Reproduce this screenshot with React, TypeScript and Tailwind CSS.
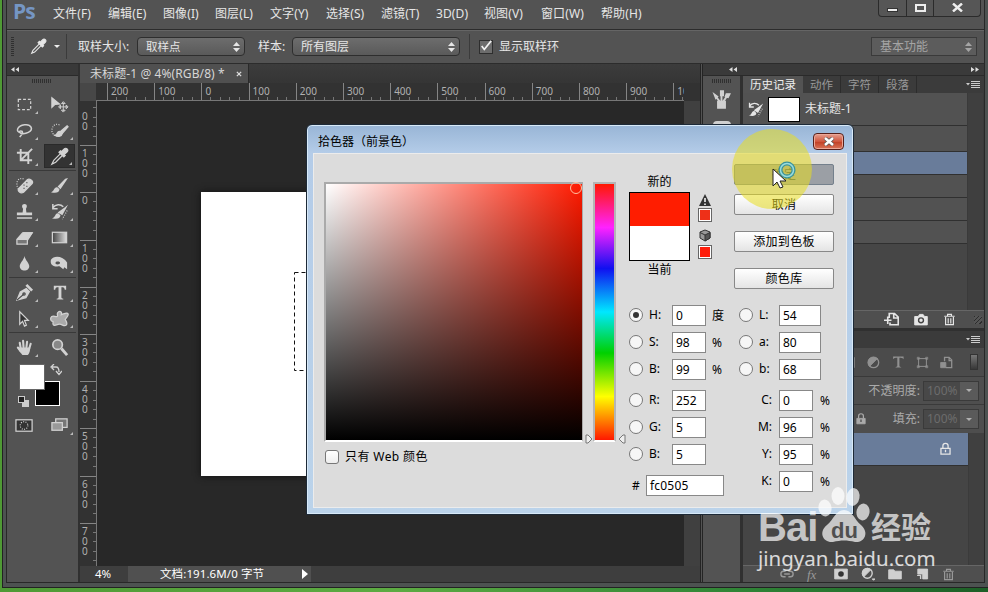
import type { ReactNode } from "react";

interface IconProps {
  children: ReactNode;
  size?: string;
  box?: string;
}

interface ToolProps {
  children: ReactNode;
  active?: boolean;
  corner?: boolean;
}

interface FieldProps {
  label: string;
  value: string;
  unit?: string;
  checked?: boolean;
}

const menus = [
  { label: "文件(F)", width: "w-[55px]" },
  { label: "编辑(E)", width: "w-[55px]" },
  { label: "图像(I)", width: "w-[52px]" },
  { label: "图层(L)", width: "w-[55px]" },
  { label: "文字(Y)", width: "w-[56px]" },
  { label: "选择(S)", width: "w-[55px]" },
  { label: "滤镜(T)", width: "w-[55px]" },
  { label: "3D(D)", width: "w-[48px]" },
  { label: "视图(V)", width: "w-[57px]" },
  { label: "窗口(W)", width: "w-[60px]" },
  { label: "帮助(H)", width: "w-[55px]" },
];

const horizontalMarks = ["200", "100", "0", "100", "200", "300", "400", "500", "600", "700", "800", "900", "10"];
const verticalMarks = ["\u00a000", "100", "0", "100", "200", "300", "400", "500", "600", "700"];

export default function App() {
  return (
    <div className="relative w-[988px] h-[592px] overflow-hidden bg-[linear-gradient(90deg,#4f9a35,#5cab42_40%,#2f8436_75%,#1d5f27)] pl-[2px] pb-[4px] font-['Noto_Sans','Noto_Sans_CJK_SC',sans-serif] text-xs leading-none text-[#e6e6e6] whitespace-nowrap">
      <div className="flex flex-col h-[588px] bg-[#4d5251] border-l border-b border-[#222] pl-[3px] pr-[3px] pb-[4px]">
        <div className="flex flex-col flex-1 min-h-0 bg-[#535353] border-x border-b border-[#282828]">
          <MenuBar />
          <OptionsBar />
          <div className="flex flex-1 min-h-0">
            <Toolbar />
            <Workspace />
            <RightDock />
          </div>
        </div>
      </div>
      <ColorPicker />
      <Watermark />
      <Pointer />
    </div>
  );
}

function Icon({ children, size = "w-5 h-5", box = "0 0 20 20" }: IconProps) {
  return (
    <svg className={`${size} shrink-0`} viewBox={box} fill="none" stroke="currentColor" strokeWidth="1.3">
      {children}
    </svg>
  );
}

function MenuBar() {
  return (
    <div className="flex items-center h-[29px] shrink-0 pl-[6px]">
      <span className="w-[40px] text-[21px] font-bold text-[#7596c4] font-['Open_Sans',sans-serif] tracking-[-1px] -mt-[7px]">Ps</span>
      {menus.map((menu) => (
        <span key={menu.label} className={`${menu.width} shrink-0 -mt-px tracking-[0.1px]`}>{menu.label}</span>
      ))}
      {/* Window buttons */}
      <div className="flex ml-auto mr-[3px] self-start h-[17px] border border-t-0 border-[#2b2b2b] rounded-b-sm bg-[#565656] divide-x divide-[#2b2b2b]">
        <span className="flex items-center justify-center w-[28px]"><i className="w-[11px] h-[4px] bg-[#eee] border border-[#333] mt-1" /></span>
        <span className="flex items-center justify-center w-[27px]"><i className="w-[11px] h-[8px] border-2 border-[#eee] -mt-px" /></span>
        <span className="flex items-center justify-center w-[46px]">
          <svg className="w-[11px] h-[9px] -mt-[2px]" viewBox="0 0 11 9" stroke="#eee" strokeWidth="2.4"><path d="M1 0.5 10 8.5M10 0.5 1 8.5" /></svg>
        </span>
      </div>
    </div>
  );
}

function UpDown() {
  return (
    <svg className="w-[7px] h-[10px] ml-auto" viewBox="0 0 7 10" fill="currentColor"><path d="M0 4 3.5 0 7 4zM0 6h7L3.5 10z" /></svg>
  );
}

function OptionsBar() {
  return (
    <div className="flex items-center h-[35px] shrink-0 border-y border-[#2c2c2c] shadow-[inset_0_1px_0_#656565] pl-[4px] pr-[7px]">
      <Grip className="w-[3px] h-[20px] bg-[repeating-linear-gradient(180deg,#303030_0_1px,transparent_1px_2px)]" />
      <span className="ml-[16px]"><Eyedropper /></span>
      <span className="ml-[7px] border-x-[3px] border-x-transparent border-t-[3px] border-t-[#eee]" />
      <span className="h-[25px] w-px bg-[#3b3b3b] ml-[6px]" />
      <span className="w-[59px] ml-[11px]">取样大小:</span>
      <div className="flex items-center w-[108px] h-[19px] pr-[4px] pl-[8px] text-[11.5px] border border-[#2e2e2e] rounded-sm bg-gradient-to-b from-[#6d6d6d] to-[#5a5a5a]">
        取样点<UpDown />
      </div>
      <span className="w-[34px] ml-[13px]">样本:</span>
      <div className="flex items-center w-[168px] h-[19px] pr-[4px] pl-[8px] border border-[#2e2e2e] rounded-sm bg-gradient-to-b from-[#6d6d6d] to-[#5a5a5a]">
        所有图层<UpDown />
      </div>
      <span className="h-[25px] w-px bg-[#3b3b3b] ml-[9px]" />
      <span className="flex w-[14px] h-[14px] ml-[9px] border border-[#2e2e2e] bg-[#6c6c6c]">
        <svg className="w-[14px] h-[14px] -mt-[2px]" viewBox="0 0 14 14" fill="none" stroke="#f2f2f2" strokeWidth="2"><path d="M2 7 5 11 13 1" /></svg>
      </span>
      <span className="ml-[6px]">显示取样环</span>
      <div className="flex items-center w-[106px] h-[19px] pr-[4px] pl-[8px] ml-auto text-[#a5a5a5] border border-[#3a3a3a] bg-[#5c5c5c]">
        基本功能<UpDown />
      </div>
    </div>
  );
}

function Grip({ className }: { className: string }) {
  return <span className={`block shrink-0 ${className}`} />;
}

function Eyedropper() {
  return (
    <Icon size="w-[17px] h-[17px]">
      <path d="M11 7 3.5 14.5 2 18l3.5-1.5L13 9" />
      <path d="M9.5 5.5 14.5 10.500 16 9l-1-1 3-3c2-2-1-5-3-3l-3 3-1-1z" fill="currentColor" />
    </Icon>
  );
}

// One cell of the two-column tool grid
function Tool({ children, active, corner = true }: ToolProps) {
  return (
    <div className={`flex items-center justify-center relative h-[24px] w-[31px] my-px ${active ? "bg-[#333] border border-[#2a2a2a]" : ""}`}>
      <Icon size="w-[19px] h-[19px]">{children}</Icon>
      {corner && <span className="absolute right-[2px] bottom-[2px] border-l-[3px] border-b-[3px] border-l-transparent border-b-[#bbb]" />}
    </div>
  );
}

function Toolbar() {
  return (
    <div className="w-[73px] shrink-0 border-r-2 border-[#303030] text-[#d2d2d2]">
      <div className="h-[12px] bg-[#393939] border-b border-[#2a2a2a] pl-[4px] pt-[3px]"><Chevrons /></div>
      <Grip className="w-[19px] h-[4px] mt-[3px] ml-[25px] bg-[repeating-linear-gradient(90deg,#303030_0_1px,transparent_1px_2px)]" />
      <div className="grid grid-cols-2 gap-x-[2px] px-[2px] mt-[8px]">
        <Tool><rect x="3.500" y="4.500" width="13" height="11" strokeDasharray="3 2" /></Tool>
        <Tool corner={false}><path d="M2 3v10l3-3 5-.5z" fill="currentColor" /><path d="M14 8v9M9.500 12.500h9M14 7l-2 2h4zM14 18l-2-2h4zM9 12.500l2-2v4zM19 12.500l-2-2v4z" strokeWidth="1" /></Tool>
        <Tool><path d="M7 13C-1 11 3 5 10 4s10 5 4 8c-3 1.500-8 2-9 0s3-2 3 0-2 3-3 5" strokeWidth="1.600" /></Tool>
        <Tool><path d="M10 4C4 2 2 7 2 10s3 7 8 5" strokeDasharray="1 1.500" /><path d="m11 11 7-6 1 1-6 7z" fill="currentColor" /><path d="M5 15c3 0 2-4 5-4l3 2c-1 4-5 4-8 2z" fill="currentColor" /></Tool>
        <Tool><path d="M6 2v12h12M2 6h12v12M7 13l11-11" strokeWidth="2" /></Tool>
        <Tool active><path d="M11 7 4 14 2 18l4-2 7-7" /><path d="m9.500 5.500 5 5L16 9l-1-1 3-3c2-2-1-5-3-3l-3 3-1-1z" fill="currentColor" /></Tool>
      </div>
      <div className="h-px mx-[2px] mt-px mb-px bg-[#393939]" />
      <div className="grid grid-cols-2 gap-x-[2px] px-[2px]">
        <Tool><path d="M9 3C2 1 0 9 4 14" strokeDasharray="1 1.500" /><path d="m4 13 9-9c2-2 7 1 5 4L9 17c-3 2-7-1-5-4z" fill="currentColor" /><path d="M9 9.500h1M12 7h1M12 11h1M9 13h1" stroke="#444" /></Tool>
        <Tool><path d="m8 11 8-8 3-1-8 12zM1 17c4-1 3-6 7-5l2 2c0 4-5 4-9 3z" fill="currentColor" stroke="none" /></Tool>
        <Tool><path d="M10 2c3 0 3 3 1.500 5l.5 4h6v3H2v-3h6l.5-4C7 5 7 2 10 2zM2 16h16v1.500H2z" fill="currentColor" stroke="none" /></Tool>
        <Tool><path d="M3 6c3-4 8-4 11-1M3 2v5h5" strokeWidth="1.600" /><path d="m8 11 7-5 4-3-6 11zM2 17c4 0 3-6 7-5l2 2c0 4-5 4-9 3z" fill="currentColor" stroke="none" /><path d="m18 9-5 9" strokeDasharray="1 1.500" /></Tool>
        <Tool><path d="m2 12 6-7h10l-5 8v4H2z" fill="#777" /><path d="m3 12 6-7h9l-5 7z" fill="currentColor" /></Tool>
        <Tool>
          <defs><linearGradient id="toolFade"><stop stopColor="#444" /><stop offset="1" stopColor="#ddd" /></linearGradient></defs>
          <rect x="2.500" y="4.500" width="15" height="11" fill="url(#toolFade)" />
        </Tool>
        <Tool><path d="M10 2c1 5 5 7 5 11 0 6-10 6-10 0 0-4 4-6 5-11z" fill="currentColor" stroke="none" /></Tool>
        <Tool><path d="M1 6c3-5 13-4 17 3v7l-3-2-1 2-4-3c-8 1-10-3-9-7zM8 8c-3 0-3 3 0 3s4-3 0-3z" fill="currentColor" fillRule="evenodd" stroke="none" /></Tool>
      </div>
      <div className="h-px mx-[2px] mt-px mb-px bg-[#393939]" />
      <div className="grid grid-cols-2 gap-x-[2px] px-[2px]">
        <Tool><path d="M12 5 5 9 1 19l11-3 4-7zM13 1l6 6-2 2-6-6z" fill="currentColor" stroke="none" /><path d="m2 18 7-6" stroke="#444" /><circle cx="9.500" cy="11.500" r="1.200" stroke="#444" /></Tool>
        <Tool><path d="M4 3h13v4h-1.500c-.3-2-.8-2.500-3.500-2.500V15c0 1 .5 1.500 2 1.500v.8H7v-.8c1.500 0 2-.5 2-1.500V4.500c-2.700 0-3.200.5-3.500 2.500H4z" fill="currentColor" stroke="none" /></Tool>
        <Tool><path d="M5 3v13l3-3 2 5 2-1-2-5h4z" fill="#333" /></Tool>
        <Tool><path d="M8 4c2-3 5-1 4 2 3-1 6-3 7-1s-2 4-3 6c1 2 3 4 1 6s-4-1-7-1-4 2-6 1 0-4-1-4-3-1-2-4 4-1 6-1 0-2 1-4z" fill="#aaa" /></Tool>
      </div>
      <div className="h-px mx-[2px] mt-px mb-px bg-[#393939]" />
      <div className="grid grid-cols-2 gap-x-[2px] px-[2px]">
        <Tool><path d="M6 11 5 5M9 10 8.500 3M12 10l.7-6M15 11l1.500-5M6 14 3 10" strokeWidth="2.200" strokeLinecap="round" /><path d="M5 10h11c0 5-2 8-3 8H8c-1-1-4-5-4-6z" fill="currentColor" stroke="none" /></Tool>
        <Tool corner={false}><circle cx="8" cy="7" r="5" strokeWidth="1.800" fill="#888" /><path d="m12 11 6 7" strokeWidth="3" /></Tool>
      </div>
      {/* Foreground and background colours overlap */}
      <div className="relative h-[48px] mt-[3px]">
        <span className="absolute left-[28px] top-[18px] w-[25px] h-[25px] bg-black border border-white" />
        <span className="absolute left-[12px] top-[1px] w-[26px] h-[26px] bg-white border border-[#666]" />
        <svg className="absolute left-[43px] top-[1px] w-[12px] h-[12px]" viewBox="0 0 12 12" fill="none" stroke="currentColor" strokeWidth="1.300"><path d="M2 3h4c2 0 3 1 3 5M4 0 1 3l3 3M6 7l3 3.500L12 7" /></svg>
        <span className="absolute left-[15px] top-[37px] w-[7px] h-[7px] bg-[#ccc]" />
        <span className="absolute left-[11px] top-[33px] w-[7px] h-[7px] bg-[#222] border border-[#ccc]" />
      </div>
      <div className="grid grid-cols-2 gap-x-[2px] px-[2px] mt-px">
        <Tool corner={false}><rect x="1" y="4" width="17" height="12" fill="#333" /><circle cx="9.500" cy="10" r="4" strokeDasharray="1 1.500" /></Tool>
        <Tool><rect x="6" y="3" width="12" height="9" fill="#777" /><rect x="2" y="7" width="11" height="8" fill="#999" /></Tool>
      </div>
    </div>
  );
}

function Chevrons({ right }: { right?: boolean }) {
  return (
    <svg className={`w-[8px] h-[5px] ${right ? "rotate-180" : ""}`} viewBox="0 0 8 5" fill="#ddd"><path d="M3.500 0v5L0 2.500zM8 0v5L4.500 2.500z" /></svg>
  );
}

function Workspace() {
  return (
    <div className="flex flex-col w-[621px] shrink-0 border-r border-[#242424]">
      <div className="flex h-[19px] shrink-0 bg-gradient-to-b from-[#3c3c3c] to-[#353535]">
        <div className="flex items-center w-[169px] pl-[10px] bg-[#505050] border-r border-[#2a2a2a] text-[#d6d6d6] pt-[1px]">
          <span className="tracking-[0.1px]">未标题-1 @ 4%(RGB/8) *</span>
          <svg className="w-[6px] h-[6px] ml-auto mr-[6px]" viewBox="0 0 7 7" stroke="#ddd" strokeWidth="1.500"><path d="m1 1 5 5M6 1 1 6" /></svg>
        </div>
      </div>
      {/* Horizontal ruler */}
      <div className="flex h-[18px] shrink-0 bg-[#323232] text-[#b0b0b0] text-[10px]">
        <span className="w-[16px] shrink-0 bg-[#474747]" />
        <div className="flex w-[588px] overflow-hidden pl-[11px] border-b border-[#777]">
          {horizontalMarks.map((mark, index) => (
            <div key={index} className="relative flex w-[47.2px] shrink-0 border-l border-[#858585] pl-[3px] pt-[3px]">
              {mark}
              <Ticks direction="row" />
            </div>
          ))}
        </div>
      </div>
      <div className="flex flex-1 min-h-0">
        {/* Vertical ruler */}
        <div className="w-[17px] shrink-0 bg-[#323232] border-r border-[#777] overflow-hidden text-[#b0b0b0] text-[10px]">
          <div className="-mt-[3px]">
            {verticalMarks.map((mark, index) => (
              <div key={index} className="relative flex flex-col h-[47.2px] border-t border-[#858585] pl-[2px] pt-[2px]">
                {mark.split("").map((digit, place) => <span key={place} className="h-[10px]">{digit}</span>)}
                <Ticks direction="column" />
              </div>
            ))}
          </div>
        </div>
        <div className="relative flex-1 bg-[#282828] overflow-hidden">
          <div className="absolute left-[104px] top-[91px] w-[400px] h-[284px] bg-white shadow-[0_0_7px_#111]" />
          <svg className="absolute left-[197px] top-[171px] w-[100px] h-[100px]" viewBox="0 0 100 100" fill="none" stroke="#111"><path d="M.5 .5h99v98H.5z" strokeDasharray="4 3" /></svg>
        </div>
        <div className="w-[16px] shrink-0 bg-[#404040]" />
      </div>
      <div className="flex items-center h-[16px] shrink-0 bg-[#3e3e3e] text-[11.5px] text-white">
        <span className="w-[48px] pl-[15px]">4%</span>
        <div className="flex items-center w-[183px] h-full pl-[32px] bg-[#505050]">
          <span className="tracking-[0.1px]">文档:191.6M/0 字节</span>
          <span className="ml-auto mr-[3px] border-y-[5px] border-y-transparent border-l-[6px] border-l-white" />
        </div>
      </div>
    </div>
  );
}

function Ticks({ direction }: { direction: "row" | "column" }) {
  return direction === "row" ? (
    <div className="absolute left-[8px] bottom-0 flex gap-[8.500px]">
      {[0, 1, 2, 3].map((tick) => <i key={tick} className="w-px h-[3px] bg-[#777]" />)}
    </div>
  ) : (
    <div className="absolute top-[8px] right-0 flex flex-col gap-[8.500px]">
      {[0, 1, 2, 3].map((tick) => <i key={tick} className="w-[3px] h-px bg-[#777]" />)}
    </div>
  );
}

function PanelMenu() {
  return (
    <svg className="w-[14px] h-[9px] ml-auto mr-[4px] self-center" viewBox="0 0 14 9" stroke="#ccc"><path d="M5 1.500h9M5 3.500h9M5 5.500h9M5 7.500h9" /><path d="M0 3h4L2 5.500z" fill="#ccc" stroke="none" /></svg>
  );
}

function RightDock() {
  return (
    <div className="flex flex-col flex-1 min-w-0 ml-px border-l border-[#242424] bg-[#303030]">
      <div className="flex h-[12px] shrink-0 bg-[#3a3a3a] border-b border-[#2a2a2a] pl-[26px] pr-[5px] pt-[3px] justify-between">
        <Chevrons />
        <Chevrons right />
      </div>
      <div className="flex flex-1 min-h-0">
        <div className="flex flex-col items-center w-[37px] shrink-0 bg-[#535353] text-[#d0d0d0]">
          <Grip className="w-[19px] h-[4px] mt-[3px] bg-[repeating-linear-gradient(90deg,#303030_0_1px,transparent_1px_2px)]" />
          <span className="mt-[6px]">
            <Icon size="w-[19px] h-[21px]"><path d="M6 12h8v7H6z" fill="currentColor" /><path d="M8 12 4 7M10 12V3M12 12l4-6" strokeWidth="2" /><path d="M2 4l4 3-2 2zM9 1h3v5H9zM15 4h4l-2 4-3-1z" fill="currentColor" /></Icon>
          </span>
          <span className="w-[18px] h-[8px] mt-[11px] bg-[#d0d0d0] rounded-t-sm" />
        </div>
        <div className="flex flex-col flex-1 min-w-0 ml-[3px]">
          <HistoryPanel />
          <LayersPanel />
        </div>
      </div>
    </div>
  );
}

function HistoryPanel() {
  return (
    <div className="flex flex-col h-[252px] shrink-0 mb-[3px]">
      <div className="flex h-[17px] shrink-0 bg-[#3b3b3b] text-[#999] text-[11.500px] text-center leading-[17px]">
        <span className="w-[60px] bg-[#535353] text-[#eee]">历史记录</span>
        <span className="w-[38px] border-r border-[#2c2c2c]">动作</span>
        <span className="w-[38px] border-r border-[#2c2c2c]">字符</span>
        <span className="w-[38px] border-r border-[#2c2c2c]">段落</span>
        <PanelMenu />
      </div>
      <div className="flex flex-1 min-h-0 bg-[#464646]">
        <div className="w-[224px] shrink-0">
          <div className="flex items-center h-[33px] bg-[#525252] border-b border-[#303030] pl-[4px]">
            <Icon size="w-[17px] h-[17px]"><path d="M3 6c3-4 8-4 11-1M3 2v5h5" strokeWidth="1.600" /><path d="m8 11 7-5 4-3-6 11zM2 17c4 0 3-6 7-5l2 2c0 4-5 4-9 3z" fill="currentColor" stroke="none" /><path d="m18 9-5 9" strokeDasharray="1 1.500" /></Icon>
            <span className="w-[32px] h-[25px] ml-[4px] mr-[5px] bg-white border border-black" />
            未标题-1
          </div>
          <div className="h-[26px] bg-[#525252] border-b border-[#303030]" />
          <div className="h-[23px] bg-[#697c9a] border-b border-[#303030]" />
          <div className="h-[23px] bg-[#525252] border-b border-[#303030]" />
          <div className="h-[23px] bg-[#525252] border-b border-[#303030]" />
          <div className="h-[23px] bg-[#525252] border-b border-[#303030]" />
        </div>
        <div className="flex-1 bg-[#3f3f3f] border-x border-[#3a3a3a]" />
      </div>
      <div className="flex items-center justify-end gap-[15px] h-[18px] shrink-0 pr-[2px] bg-[#4f4f4f] border-t border-[#666]">
        {/* New document from state */}
        <Icon size="w-[15px] h-[15px]"><path d="M7 8V2h7l5 5v10H8v-3M13 2v6h6M0 11h10M5 6v10" strokeWidth="2.200" /></Icon>
        <Icon size="w-[14px] h-[14px]"><path d="M1 5h5l2-3h5l2 3h4v12H1z" fill="currentColor" /><circle cx="10" cy="10.500" r="3.500" stroke="#444" strokeWidth="2" /></Icon>
        <TrashIcon />
        <Grip className="w-[8px] h-[8px] ml-[3px] bg-[repeating-linear-gradient(135deg,#2c2c2c_0_1px,#555_1px_3px)]" />
      </div>
    </div>
  );
}

function TrashIcon() {
  return (
    <Icon size="w-[13px] h-[13px]"><path d="M2 5h16M7 5V2h6v3M4 6v12h12V6M8 8v8M12 8v8" strokeWidth="1.800" /></Icon>
  );
}

function PercentBox() {
  return (
    <span className="flex items-center w-[56px] h-[20px] ml-[3px] bg-[#484848] border border-[#3a3a3a] text-[#6c6c6c]">
      <span className="w-[36px] pl-[3px]">100%</span>
      <span className="flex flex-1 h-full items-center justify-center bg-[#5a5a5a]"><i className="border-x-[3px] border-x-transparent border-t-[3px] border-t-[#b0b0b0]" /></span>
    </span>
  );
}

function LockIcon() {
  return (
    <Icon size="w-[13px] h-[14px]"><path d="M3 9h14v9H3zM6 9V5c0-5 8-5 8 0v4M10 11v4" strokeWidth="2" /></Icon>
  );
}

function LayersPanel() {
  return (
    <div className="flex flex-col flex-1 min-h-0">
      <div className="flex h-[17px] shrink-0 bg-[#3b3b3b]"><PanelMenu /></div>
      {/* Layer filters */}
      <div className="flex items-center justify-end gap-[11px] h-[29px] shrink-0 pr-[6px] bg-[#4b4b4b] border-b border-[#393939] text-[#919191]">
        <Icon size="w-[13px] h-[13px]"><path d="M2 3h15v14H2z" strokeWidth="2" /></Icon>
        <Icon size="w-[13px] h-[13px]"><circle cx="10" cy="10" r="8" strokeWidth="2" /><path d="M4 16A8 8 0 0 1 16 4z" fill="currentColor" /></Icon>
        <Icon size="w-[14px] h-[14px]"><path d="M3 2h15v4c-2-2-3-2-6-2v12l3 2H6l3-2V4C6 4 5 4 3 6z" fill="currentColor" stroke="none" /></Icon>
        <Icon size="w-[13px] h-[13px]"><path d="M4 3v14M16 3v14M3 4h14M3 16h14" strokeWidth="1.500" /><path d="M2 2h3v3H2zM15 2h3v3h-3zM2 15h3v3H2zM15 15h3v3h-3z" /></Icon>
        <Icon size="w-[13px] h-[13px]"><path d="M7 8V2h7l4 4v12H9M14 2v5h4" strokeWidth="2" /><path d="M1 10h8v8H1z" fill="currentColor" /></Icon>
        <span className="w-[8px] h-[16px] ml-[6px] border border-[#333] bg-gradient-to-b from-[#777] to-[#383838]" />
      </div>
      <div className="flex items-center justify-end h-[28px] shrink-0 pr-[5px] bg-[#4e4e4e] border-b border-[#3a3a3a] text-[#aaa]">
        <span className="tracking-[0.1px]">不透明度:</span><PercentBox />
      </div>
      <div className="flex items-center justify-end h-[28px] shrink-0 pr-[5px] bg-[#4e4e4e] text-[#aaa]">
        <span className="mr-[26px]">
          <Icon size="w-[12px] h-[14px]"><path d="M3 9h14v9H3z" fill="currentColor" /><path d="M6 9V5c0-5 8-5 8 0v4" strokeWidth="2" /><path d="M10 11v4" stroke="#444" strokeWidth="2" /></Icon>
        </span>
        填充:<PercentBox />
      </div>
      <div className="flex flex-1 min-h-0 bg-[#454545]">
        <div className="w-[225px] shrink-0">
          <div className="flex items-center justify-end h-[33px] pr-[16px] bg-[#697c9a] border-b border-[#303030]"><LockIcon /></div>
        </div>
        <div className="flex-1 bg-[#404040] border-l border-[#3b3b3b]" />
      </div>
      <div className="flex items-center gap-[13px] h-[17px] shrink-0 pl-[37px] bg-[#4f4f4f] border-t border-[#666] text-[#d0d0d0]">
        <span className="text-[#999]"><Icon size="w-[14px] h-[14px]"><path d="M8 6H5C0 6 0 14 5 14h3M12 6h3c5 0 5 8 0 8h-3M6 10h8" strokeWidth="2" /></Icon></span>
        <span className="w-[14px] text-[13px] italic text-[#999] font-['Liberation_Serif',serif]">fx</span>
        <Icon size="w-[14px] h-[14px]"><path d="M1 3h18v14H1z" fill="currentColor" /><circle cx="10" cy="10" r="4" fill="#333" stroke="none" /></Icon>
        <Icon size="w-[14px] h-[14px]"><circle cx="9" cy="9" r="7" strokeWidth="2" /><path d="M4 14A7 7 0 0 1 14 4z" fill="currentColor" /><path d="M16 17h4l-2 2z" fill="currentColor" /></Icon>
        <Icon size="w-[14px] h-[14px]"><path d="M1 4h7l2 2h9v11H1z" fill="currentColor" /></Icon>
        <Icon size="w-[14px] h-[14px]"><path d="M4 3h14v14h-7v-7H4z" fill="currentColor" /><path d="M3 12h5v5" strokeWidth="2" /></Icon>
        <span className="text-[#999]"><TrashIcon /></span>
      </div>
    </div>
  );
}

function ColorPicker() {
  return (
    <div className="absolute left-[306px] top-[124px] w-[548px] h-[391px] flex flex-col rounded-t-md border border-[#1d2a38] bg-[linear-gradient(180deg,#98b5d6,#b4cce8_28px,#bbd3ea)] shadow-[inset_0_0_0_1px_#d8e9f7] text-black">
      <div className="flex items-center h-[28px] shrink-0 pl-[11px] pr-[9px] pt-[6px]">
        拾色器（前景色）
        <span className="flex items-center justify-center w-[31px] h-[17px] -mt-px ml-auto rounded-sm border border-[#57201a] bg-[linear-gradient(180deg,#e5a090,#d0563e_50%,#c13d22_51%,#d9755a)] shadow-[inset_0_0_0_1px_#eca898]">
          <svg className="w-[12px] h-[9px]" viewBox="0 0 12 9"><path d="m2 1 8 7M10 1 2 8" stroke="#555" strokeWidth="4" /><path d="m2 1 8 7M10 1 2 8" stroke="white" strokeWidth="2.500" /></svg>
        </span>
      </div>
      <div className="flex flex-1 mx-[6px] mb-[6px] bg-[#dcdcdc] border border-[#ececec]">
        <div className="w-[259px] ml-[10px] mt-[28px]">
          <div className="relative w-[259px] h-[260px] border-2 border-r-[1px] border-[#aaa] border-b-white bg-[linear-gradient(0deg,black,transparent),linear-gradient(90deg,white,#ff1a00)] bg-origin-content">
            <span className="absolute right-0 -top-[2px] w-[12px] h-[12px] rounded-full border-[1.500px] border-[#ffc0a0]" />
          </div>
          <div className="flex items-center mt-[8px] tracking-[0.4px]">
            <span className="w-[14px] h-[14px] ml-px mr-[6px] rounded-[3px] border border-[#777] bg-gradient-to-b from-white to-[#eee]" />
            只有 Web 颜色
          </div>
        </div>
        <div className="flex items-end w-[42px] h-[265px] mt-[28px] ml-[2px]">
          <svg className="w-[8px] h-[10px] mb-[3px]" viewBox="0 0 8 10" fill="#eee" stroke="#777"><path d="M1 1h2l4 4-4 4H1z" /></svg>
          <span className="w-[23px] h-[260px] mb-[5px] border-2 border-[#b5b5b5] border-b-white bg-[linear-gradient(180deg,#ff1800,#ff22ff_17%,#1010f0_33%,#00e8ff_50%,#00d000_66%,#ffff00_83%,#ff1800)]" />
          <svg className="w-[8px] h-[10px] ml-[2px] mb-[3px]" viewBox="0 0 8 10" fill="#eee" stroke="#777"><path d="M7 1H5L1 5l4 4h2z" /></svg>
        </div>
        <div className="flex flex-col ml-[2px]">
          <div className="flex h-[149px]">
            <div className="w-[61px] pt-[22px] text-center">
              新的
              <div className="h-[69px] mt-[4px] mb-[3px] border border-black bg-[linear-gradient(180deg,#ff1d00_50%,white_50%)]" />
              当前
            </div>
            <div className="flex flex-col items-center w-[14px] ml-[8px] pt-[40px]">
              <svg className="w-[14px] h-[13px]" viewBox="0 0 14 13"><path d="M7 0 13 12H1z" fill="#333" /><path d="M7 4v4M7 9.500v1.500" stroke="white" strokeWidth="1.500" /></svg>
              <span className="w-[14px] h-[14px] mt-px border border-[#666] bg-[#ee3018] shadow-[inset_0_0_0_1px_white]" />
              <svg className="w-[12px] h-[13px] mt-[7px]" viewBox="0 0 12 13" stroke="#333"><path d="m1 3 5-2 5 2v6l-5 3-5-3z" fill="#999" /><path d="M1 3.500 6 6v6l5-3V3.500L6 6" fill="#555" /></svg>
              <span className="w-[14px] h-[14px] mt-[3px] border border-[#666] bg-[#ff1d0a] shadow-[inset_0_0_0_1px_white]" />
            </div>
            <div className="flex flex-col ml-[22px] pt-[10px]">
              <span className="flex items-center justify-center w-[100px] h-[21px] mb-[9px] rounded-[2px] border border-[#74808c] bg-[#9b9fa5] text-[#2f4a50]">确定</span>
              <DialogButton label="取消" gap="mb-[16px]" />
              <DialogButton label="添加到色板" gap="mb-[16px]" />
              <DialogButton label="颜色库" gap="mb-0" />
            </div>
          </div>
          <div className="flex">
            <div className="flex flex-col w-[110px] gap-[6px] pt-[2px]">
              <Field label="H:" value="0" unit="度" checked />
              <Field label="S:" value="98" unit="%" />
              <Field label="B:" value="99" unit="%" />
              <div className="h-[4px] -mb-[6px]" />
              <Field label="R:" value="252" />
              <Field label="G:" value="5" />
              <Field label="B:" value="5" />
              <div className="flex items-center h-[21px] mt-[4px] pl-[3px]">
                <span className="w-[14px]">#</span>
                <span className="flex items-center w-[78px] h-[21px] shrink-0 pl-[3px] border border-[#888] bg-white tracking-[0.2px]">fc0505</span>
              </div>
            </div>
            <div className="flex flex-col gap-[6px] pt-[2px]">
              <LabField label="L:" value="54" />
              <LabField label="a:" value="80" />
              <LabField label="b:" value="68" />
              <div className="h-[4px] -mb-[6px]" />
              <CmykField label="C:" value="0" />
              <CmykField label="M:" value="96" />
              <CmykField label="Y:" value="95" />
              <CmykField label="K:" value="0" />
            </div>
          </div>
        </div>
      </div>
    </div>
  );
}

function DialogButton({ label, gap }: { label: string; gap: string }) {
  return (
    <span className={`flex items-center justify-center w-[100px] h-[21px] shrink-0 rounded-[2px] border border-[#888] bg-[linear-gradient(180deg,#fff,#f2f2f2_50%,#e4e4e4)] tracking-[0.3px] ${gap}`}>{label}</span>
  );
}

function Radio({ checked }: { checked?: boolean }) {
  return (
    <span className="flex items-center justify-center w-[14px] h-[14px] -mt-px shrink-0 rounded-full border border-[#777] bg-[#f6f6f6]">
      {checked && <i className="w-[6px] h-[6px] rounded-full bg-[#333]" />}
    </span>
  );
}

function Field({ label, value, unit, checked }: FieldProps) {
  return (
    <div className="flex items-center h-[21px]">
      <Radio checked={checked} />
      <span className="w-[23px] ml-[6px] -mt-px">{label}</span>
      <span className="flex items-center w-[34px] h-[21px] pl-[3px] border border-[#888] bg-white">{value}</span>
      <span className="ml-[6px]">{unit}</span>
    </div>
  );
}

function LabField({ label, value }: FieldProps) {
  return (
    <div className="flex items-center h-[21px]">
      <Radio />
      <span className="w-[20px] ml-[6px] -mt-px">{label}</span>
      <span className="flex items-center w-[42px] h-[21px] pl-[3px] border border-[#888] bg-white">{value}</span>
    </div>
  );
}

function CmykField({ label, value }: FieldProps) {
  return (
    <div className="flex items-center h-[21px]">
      <span className="w-[33px] mr-[7px] -mt-px text-right">{label}</span>
      <span className="flex items-center w-[34px] h-[21px] pl-[3px] border border-[#888] bg-white">{value}</span>
      <span className="ml-[7px]">%</span>
    </div>
  );
}

// Yellow click highlight with the busy cursor over it
function Pointer() {
  return (
    <div className="absolute left-[732px] top-[129px] w-[80px] h-[80px] rounded-full bg-[#e8dc20]/55">
      <svg className="w-[80px] h-[80px]" viewBox="0 0 80 80">
        <circle cx="55" cy="41" r="6.500" fill="none" stroke="#3a939b" strokeWidth="4" />
        <circle cx="55" cy="41" r="6.500" fill="none" stroke="#9adcdc" strokeWidth="1.500" />
        <path d="M41 40v17l4-4 3 6 3-1-3-6h6z" fill="white" stroke="#222" />
      </svg>
    </div>
  );
}

function Watermark() {
  return (
    <div className="absolute left-[758px] top-[485px] w-[178px] text-white/70">
      <div className="flex items-end h-[60px]">
        <span className="w-[59px] text-[40px] leading-[36px] font-bold font-['Liberation_Sans',sans-serif] tracking-[-1px]">Bai</span>
        <svg className="w-[54px] h-[60px] shrink-0" viewBox="0 0 54 60" fill="currentColor">
          <ellipse cx="8" cy="23" rx="6.500" ry="8.500" transform="rotate(-10 8 23)" />
          <ellipse cx="21" cy="11" rx="6.500" ry="9" />
          <ellipse cx="36" cy="12" rx="6.500" ry="9" transform="rotate(10 36 12)" />
          <ellipse cx="46" cy="27" rx="6.500" ry="8.500" transform="rotate(10 46 27)" />
          <path d="M27 25c8 0 10 9 17 15 9 8 3 18-6 17-8-2-14-2-22 0-10 1-15-10-6-17 7-6 9-15 17-15z" />
          <text x="14" y="53" fontSize="22" fontWeight="bold" fill="#505050" fontFamily="Liberation Sans">du</text>
        </svg>
        <span className="text-[30px] leading-[36px] font-bold">经验</span>
      </div>
      <div className="text-[20.500px] leading-[26px] text-white/80">jingyan.baidu.com</div>
    </div>
  );
}
